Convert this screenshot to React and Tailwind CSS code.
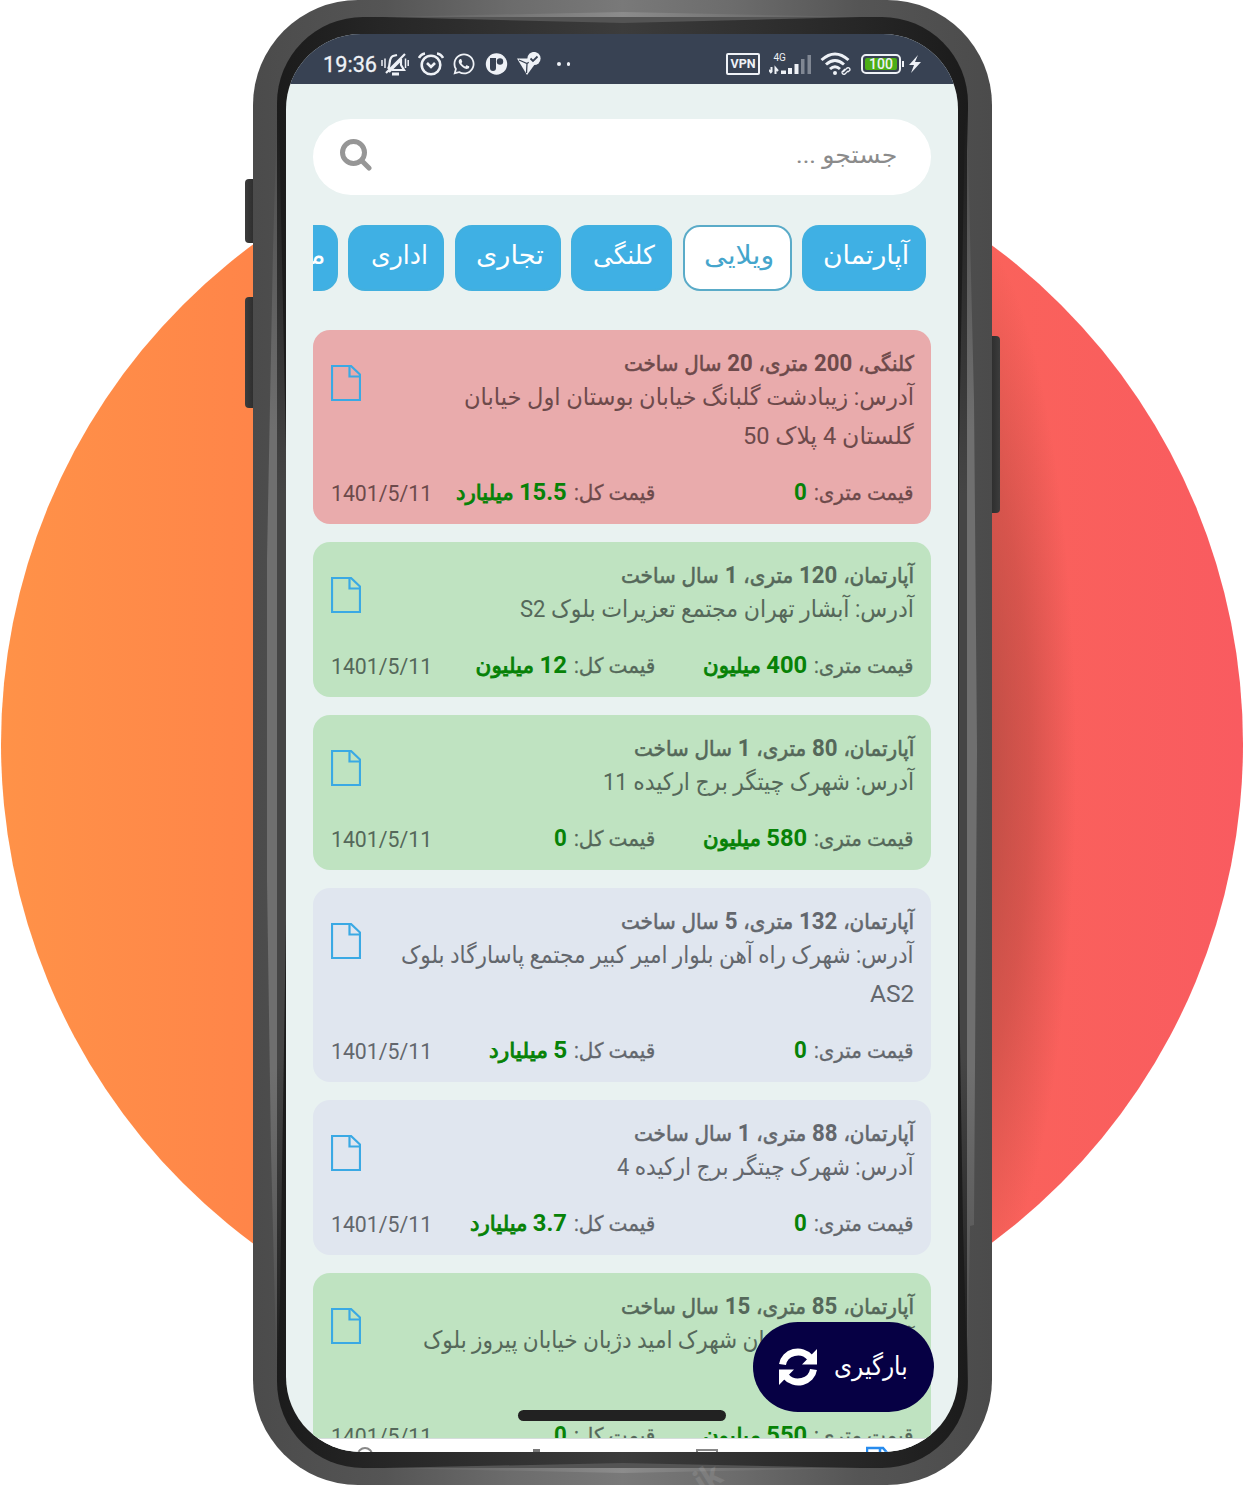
import { useLayoutEffect, useRef } from "react";
import { FaWhatsapp } from "react-icons/fa";

const FONT = "font-[Roboto,'DejaVu_Sans',sans-serif]";

/* Single line of text stretched or squeezed to a given width. */
function Fit({ w, className = "", dir = "rtl", children }) {
  const ref = useRef(null);
  useLayoutEffect(() => {
    const el = ref.current;
    const natural = el.offsetWidth;
    if (natural) el.style.transform = `scaleX(${w / natural})`;
  }, [w, children]);
  return (
    <div dir={dir} className={`flex shrink-0 whitespace-nowrap ${className}`} style={{ width: w }}>
      <span ref={ref} className={`inline-block shrink-0 ${dir === "rtl" ? "origin-right" : "origin-left"}`}>
        {children}
      </span>
    </div>
  );
}

/* Bold numerals among semi-bold Persian words. */
function Mixed({ text }) {
  return text.split(/([\d.]+)/).map((part, i) =>
    /\d/.test(part)
      ? <b key={i} className="text-[24px] font-bold [-webkit-text-stroke:0]">{part}</b>
      : part
  );
}

function FileIcon() {
  return (
    <svg viewBox="0 0 30 36" className="h-9 w-[30px] text-[#3aa9e4]" fill="none" stroke="currentColor" strokeWidth="2.200">
      <path d="M1 1H20L29 9.500V35H1Z" />
      <path d="M18.500 1V11.500H29" />
    </svg>
  );
}

const cards = [
  {
    tone: "bg-[#e9abac] text-[#6d4a4b]", h: "h-[194px]",
    title: ["کلنگی، 200 متری، 20 سال ساخت", 290],
    address: [["آدرس: زیبادشت گلبانگ خیابان بوستان اول خیابان", 450], ["گلستان 4 پلاک 50", 171]],
    meter: ["0", 13], total: ["15.5 میلیارد", 111],
  },
  {
    tone: "bg-[#bfe3c1] text-[#55685a]", h: "h-[155px]",
    title: ["آپارتمان، 120 متری، 1 سال ساخت", 293],
    address: [["آدرس: آبشار تهران مجتمع تعزیرات بلوک S2", 394]],
    meter: ["400 میلیون", 104], total: ["12 میلیون", 91],
  },
  {
    tone: "bg-[#bfe3c1] text-[#55685a]", h: "h-[155px]",
    title: ["آپارتمان، 80 متری، 1 سال ساخت", 280],
    address: [["آدرس: شهرک چیتگر برج ارکیده 11", 311]],
    meter: ["580 میلیون", 104], total: ["0", 13],
  },
  {
    tone: "bg-[#e0e6ef] text-[#63676d]", h: "h-[194px]",
    title: ["آپارتمان، 132 متری، 5 سال ساخت", 293],
    address: [["آدرس: شهرک راه آهن بلوار امیر کبیر مجتمع پاسارگاد بلوک", 513], ["AS2", 44]],
    meter: ["0", 13], total: ["5 میلیارد", 78],
  },
  {
    tone: "bg-[#e0e6ef] text-[#63676d]", h: "h-[155px]",
    title: ["آپارتمان، 88 متری، 1 سال ساخت", 280],
    address: [["آدرس: شهرک چیتگر برج ارکیده 4", 297]],
    meter: ["0", 13], total: ["3.7 میلیارد", 97],
  },
  {
    tone: "bg-[#bfe3c1] text-[#55685a]", h: "h-[194px]",
    title: ["آپارتمان، 85 متری، 15 سال ساخت", 293],
    address: [["آدرس: استان تهران شهرک امید دژبان خیابان پیروز بلوک", 491]],
    meter: ["550 میلیون", 104], total: ["0", 13],
  },
];

function Card({ tone, h, title, address, meter, total }) {
  return (
    <article dir="rtl" className={`flex shrink-0 flex-col rounded-[17px] px-[17px] ${tone} ${h}`}>
      <div className="flex justify-between">
        <div className="pt-[17px]">
          <Fit w={title[1]} className="h-[31px] text-[21.500px] leading-[32px] [word-spacing:1px] [-webkit-text-stroke:0.6px_currentColor]">
            <Mixed text={title[0]} />
          </Fit>
          {address.map(([line, w]) => (
            <Fit key={line} w={w} className="h-[38.500px] text-[24px] leading-[38px]">{line}</Fit>
          ))}
        </div>
        <div className="-mr-4 pt-[35px] pl-px"><FileIcon /></div>
      </div>
      <div className="mt-auto flex h-[51px] text-[21.500px] leading-[39px]">
        <div className="flex w-[259px] gap-[7px]">
          <Fit w={100} className="[-webkit-text-stroke:0.3px_currentColor]">قیمت متری:</Fit>
          <Fit w={meter[1]} className="text-[#078207] [-webkit-text-stroke:0.9px_currentColor]"><Mixed text={meter[0]} /></Fit>
        </div>
        <div className="flex gap-[7px]">
          <Fit w={81} className="[-webkit-text-stroke:0.3px_currentColor]">قیمت کل:</Fit>
          <Fit w={total[1]} className="text-[#078207] [-webkit-text-stroke:0.9px_currentColor]"><Mixed text={total[0]} /></Fit>
        </div>
        <Fit w={101} dir="ltr" className="mr-auto pl-px text-[22.500px] leading-[40px]">1401/5/11</Fit>
      </div>
    </article>
  );
}

const tabs = [
  { label: "آپارتمان", w: "w-[124px]", t: 86 },
  { label: "ویلایی", w: "w-[109px]", t: 70, active: true },
  { label: "کلنگی", w: "w-[101px]", t: 62 },
  { label: "تجاری", w: "w-[106px]", t: 68 },
  { label: "اداری", w: "w-[96px]", t: 57 },
  { label: "مغازه", w: "w-[96px]", t: 66 },
];

function StatusBar() {
  return (
    <header className="flex h-[50px] shrink-0 items-start bg-[#384253] pt-[18px] pl-[37px] text-[#eef1f6]">
      <Fit w={54} dir="ltr" className="text-[22.500px] leading-[25px] [-webkit-text-stroke:0.3px_currentColor]">19:36</Fit>
      <svg className="ml-[4px] h-6 w-7" viewBox="0 0 28 24" fill="none" stroke="currentColor" strokeWidth="2.200">
        <path d="M7 17C10 13 7 6 12 4L16 3M20 7V13L23 18H11M5 21L24 2M8 20L20 8" />
        <path d="M1 8V14M4 6.500V16M24.500 6.500V16M27.200 8V14" strokeWidth="1.500" />
        <path d="M11 22H18" strokeWidth="3" />
      </svg>
      <svg className="ml-[9px] h-6 w-[26px]" viewBox="0 0 26 24" fill="none" stroke="currentColor" strokeWidth="2.600">
        <circle cx="13" cy="13" r="9.300" />
        <path d="M9 11L13 15L17 11M1 6Q3 2 7 1.500M25 6Q23 2 19 1.500" />
      </svg>
      <FaWhatsapp className="ml-[8px] h-6 w-[24px]" />
      <svg className="ml-[9px] h-6 w-[23px]" viewBox="0 0 23 24">
        <circle cx="11.500" cy="12" r="10.700" fill="currentColor" />
        <path d="M5 6H11V16Q11 19 8 19Q5 19 5 16Z" fill="#384253" />
        <circle cx="15" cy="9.500" r="3.200" fill="#384253" />
      </svg>
      <svg className="ml-[9px] h-6 w-6" viewBox="0 0 24 24">
        <path d="M0 6.500H14L18 12L10 23Z" fill="currentColor" />
        <path d="M2 8L10 11.500L15 8M10 11.500L9.500 21" stroke="#384253" strokeWidth="1.300" fill="none" />
        <circle cx="17" cy="6.500" r="6.600" fill="currentColor" />
        <path d="M13.500 6.500L16 9L20.500 4.500" stroke="#384253" strokeWidth="1.800" fill="none" />
      </svg>
      <span className="mt-[10px] ml-[16px] size-[3.500px] rounded-full bg-current" />
      <span className="mt-[10px] ml-[6px] size-[3.500px] rounded-full bg-current" />
      <div className="mt-[1px] ml-[156px] flex h-[22px] w-[34px] items-center justify-center rounded-[2px] border-2 border-current text-[12.500px] font-bold">VPN</div>
      <svg className="ml-[9px] h-[26px] w-[43px]" viewBox="0 0 43 26" fill="currentColor">
        <text x="4.500" y="9" fontSize="10" fontFamily="Roboto">4G</text>
        <path d="M2.500 15V20M0 18L2.500 21M6.500 22V16L9 19" stroke="currentColor" strokeWidth="2" fill="none" />
        <path d="M12 18.500H17V22H12ZM19 16H23V22H19ZM25.500 12H29.500V22H25.500Z" />
        <path d="M32 7H35.500V22H32ZM38.500 3H42V22H38.500Z" opacity=".4" />
      </svg>
      <svg className="ml-[8px] h-6 w-8" viewBox="0 0 32 24" fill="none" stroke="currentColor" strokeWidth="3">
        <path d="M1.500 8Q15 -4 28.500 8M6 12.500Q15 4.500 24 12.500M10 17Q15 12.500 20 17" />
        <circle cx="15" cy="21" r="2" fill="currentColor" stroke="none" />
        <path d="M23 20L27 16Q30 15 30 18L28 20M25 17L22 20Q22 23 25 22L28 19" strokeWidth="1.400" />
      </svg>
      <div className="mt-[2px] ml-[9px] flex h-5 w-10 rounded-[5px] border-2 border-current p-[2px]">
        <div className="flex flex-1 items-center justify-center rounded-[2px] bg-[#4cae17] text-[14px] font-medium">100</div>
      </div>
      <span className="mt-[9px] ml-[1px] h-[6px] w-[2px] bg-current" />
      <svg className="mt-[3px] ml-[5px] h-[18px] w-3" viewBox="0 0 12 18" fill="currentColor"><path d="M9 0L0 10H5L2 18L12 7H6Z" /></svg>
    </header>
  );
}

/* Light reflections and dark corners of the phone's metal rim. */
function RimReflections() {
  return (
    <svg className="absolute inset-0 h-[1485px] w-[739px]" viewBox="0 0 739 1485" aria-hidden="true">
      <defs>
        <linearGradient id="edge" x1="0" y1="0" x2="0" y2="1">
          <stop offset="0" stopColor="#4b4b4b" />
          <stop offset=".25" stopColor="#6f6f6f" />
          <stop offset=".75" stopColor="#6f6f6f" />
          <stop offset="1" stopColor="#4b4b4b" />
        </linearGradient>
        <linearGradient id="side" x1="0" y1="0" x2="0" y2="1">
          <stop offset="0" stopColor="#1c1c1c" />
          <stop offset=".3" stopColor="#454545" />
          <stop offset=".75" stopColor="#454545" />
          <stop offset="1" stopColor="#1c1c1c" />
        </linearGradient>
        <linearGradient id="cap" x1="0" y1="0" x2="1" y2="0">
          <stop offset="0" stopColor="#5a5a5a" />
          <stop offset=".5" stopColor="#8c8c8c" />
          <stop offset="1" stopColor="#5a5a5a" />
        </linearGradient>
      </defs>
      <path d="M24 110L20 250L14 560V880L18 1150L24 1390Z" fill="url(#edge)" />
      <path d="M714 110L721 400L724 750L721 1225L717 1226L714 1390Z" fill="url(#edge)" />
      <path d="M24 120H26L33 450V920L27 1300L24 1370Z" fill="url(#side)" />
      <path d="M714 120H712L706 450V980L710 1225L714 1370Z" fill="url(#side)" />
      <path d="M130 17L370 12L608 17Z" fill="url(#cap)" />
      <path d="M130 17H608L370 23Z" fill="#545454" />
      <path d="M130 1468L370 1473L608 1468Z" fill="url(#cap)" />
      <path d="M130 1468H608L370 1463Z" fill="#545454" />
    </svg>
  );
}

export default function App() {
  return (
    <main className={`relative flex h-[1486px] w-[1244px] justify-center overflow-hidden bg-white ${FONT}`}>
      <div className="absolute top-[123px] left-px size-[1242px] overflow-hidden rounded-full bg-[linear-gradient(90deg,#ff9248_0%,#ff8549_20%,#fb6a57_60%,#fa625b_80%,#f95b60_100%)]">
        <div className="absolute top-[70px] left-[960px] h-[1060px] w-[130px] bg-[radial-gradient(ellipse_115px_540px_at_0_54%,rgba(135,60,50,.62),rgba(150,60,50,.35)_60%,transparent)]" />
      </div>
      <div className="absolute top-[179px] left-[245px] h-16 w-4 rounded-l-[4px] bg-linear-to-r from-[#3c3c3c] to-[#222]" />
      <div className="absolute top-[297px] left-[245px] h-[111px] w-4 rounded-l-[4px] bg-linear-to-r from-[#3c3c3c] to-[#222]" />
      <div className="absolute top-[336px] left-[984px] h-[177px] w-4 rounded-r-[4px] bg-linear-to-r from-[#222] to-[#3c3c3c]" />
      <div className="relative ml-[1px] h-[1485px] w-[739px] overflow-hidden rounded-[105px] bg-[linear-gradient(90deg,#4b4b4b_0%,#555_18%,#6c6c6c_35%,#797979_50%,#6c6c6c_65%,#555_82%,#4b4b4b_100%)] px-6 py-[17px]">
        <div className="h-full rounded-[86px] bg-[linear-gradient(90deg,#1b1b1b,#262626_15%,#3c3c3c_50%,#262626_85%,#1b1b1b)]" />
        <RimReflections />
        <div className="absolute top-[1468px] left-[442px] -rotate-[32deg] text-[32px] leading-[20px] font-bold text-white/10">ik</div>
        <div className="absolute top-[34px] left-[33px] flex h-[1418px] w-[672px] flex-col overflow-hidden rounded-[75px] bg-[#e9f2f1]">
          <StatusBar />
          <div className="flex min-h-0 flex-1 flex-col overflow-hidden px-[27px] pt-[35px]">
            <div className="flex h-[76px] shrink-0 items-center justify-between rounded-[38px] bg-white pr-[34px] pl-[27px]">
              <svg viewBox="0 0 32 32" className="mb-[5px] size-8 text-[#969696]" fill="none" stroke="currentColor" strokeWidth="5">
                <circle cx="13.500" cy="13.500" r="11" />
                <path d="M21.500 21.500L29 29" strokeLinecap="round" />
              </svg>
              <Fit w={101} className="h-[44px] text-[24px] leading-[40px] text-[#8b8b8b]">جستجو ...</Fit>
            </div>
            <nav dir="rtl" className="mt-[30px] flex shrink-0 gap-[10.400px] overflow-hidden pr-[5px]">
              {tabs.map(({ label, w, t, active }) => (
                <div key={label} className={`flex h-[66px] shrink-0 justify-center rounded-[17px] border-2 pl-[5px] text-[26px] leading-[56px] ${w} ${active ? "border-[#5aabc8] bg-white text-[#45a5cc]" : "border-[#42b0df] bg-[#3fb0e4] text-white"}`}>
                  <Fit w={t}>{label}</Fit>
                </div>
              ))}
            </nav>
            <section className="mt-[39px] flex flex-col gap-[18px]">
              {cards.map((c, i) => <Card key={i} {...c} />)}
            </section>
          </div>
          <footer className="flex h-[14px] shrink-0 overflow-hidden border-t border-[#d5dcdc] bg-white pt-[8px] pl-[71px]">
            <svg viewBox="0 0 16 16" className="size-4 text-[#888]" fill="none" stroke="currentColor" strokeWidth="2"><circle cx="8" cy="8" r="7" /></svg>
            <span className="mt-[2px] ml-[160px] h-2 w-[7px] bg-[#777]" />
            <span className="mt-[2px] ml-[156px] h-5 w-[22px] border-2 border-[#888]" />
            <svg viewBox="0 0 24 28" className="-mt-px ml-[148px] h-7 w-6 shrink-0 text-[#278bed]" fill="none" stroke="currentColor" strokeWidth="2.500"><path d="M1 27V2H17L23 9V27M14 2V10H23" /></svg>
          </footer>
          <div dir="rtl" className="absolute top-[1288px] left-[467px] flex h-[90px] w-[181px] rounded-full bg-[#060044] pr-[26px] text-white">
            <Fit w={74} className="text-[26px] leading-[88px]">بارگیری</Fit>
            <svg viewBox="0 0 38 38" className="mt-[26px] mr-[17px] size-[38px]" fill="none" stroke="currentColor" strokeWidth="7">
              <path d="M3.500 16.500A15.500 14.500 0 0 1 31 9.500M34.500 21.500A15.500 14.500 0 0 1 7 28.500" />
              <path d="M38 1V16.500H23ZM0 37V21.500H15Z" fill="currentColor" stroke="none" />
            </svg>
          </div>
          <div className="absolute top-[1376px] left-[232px] h-[11px] w-[208px] rounded-full bg-[#222]" />
        </div>
      </div>
    </main>
  );
}
